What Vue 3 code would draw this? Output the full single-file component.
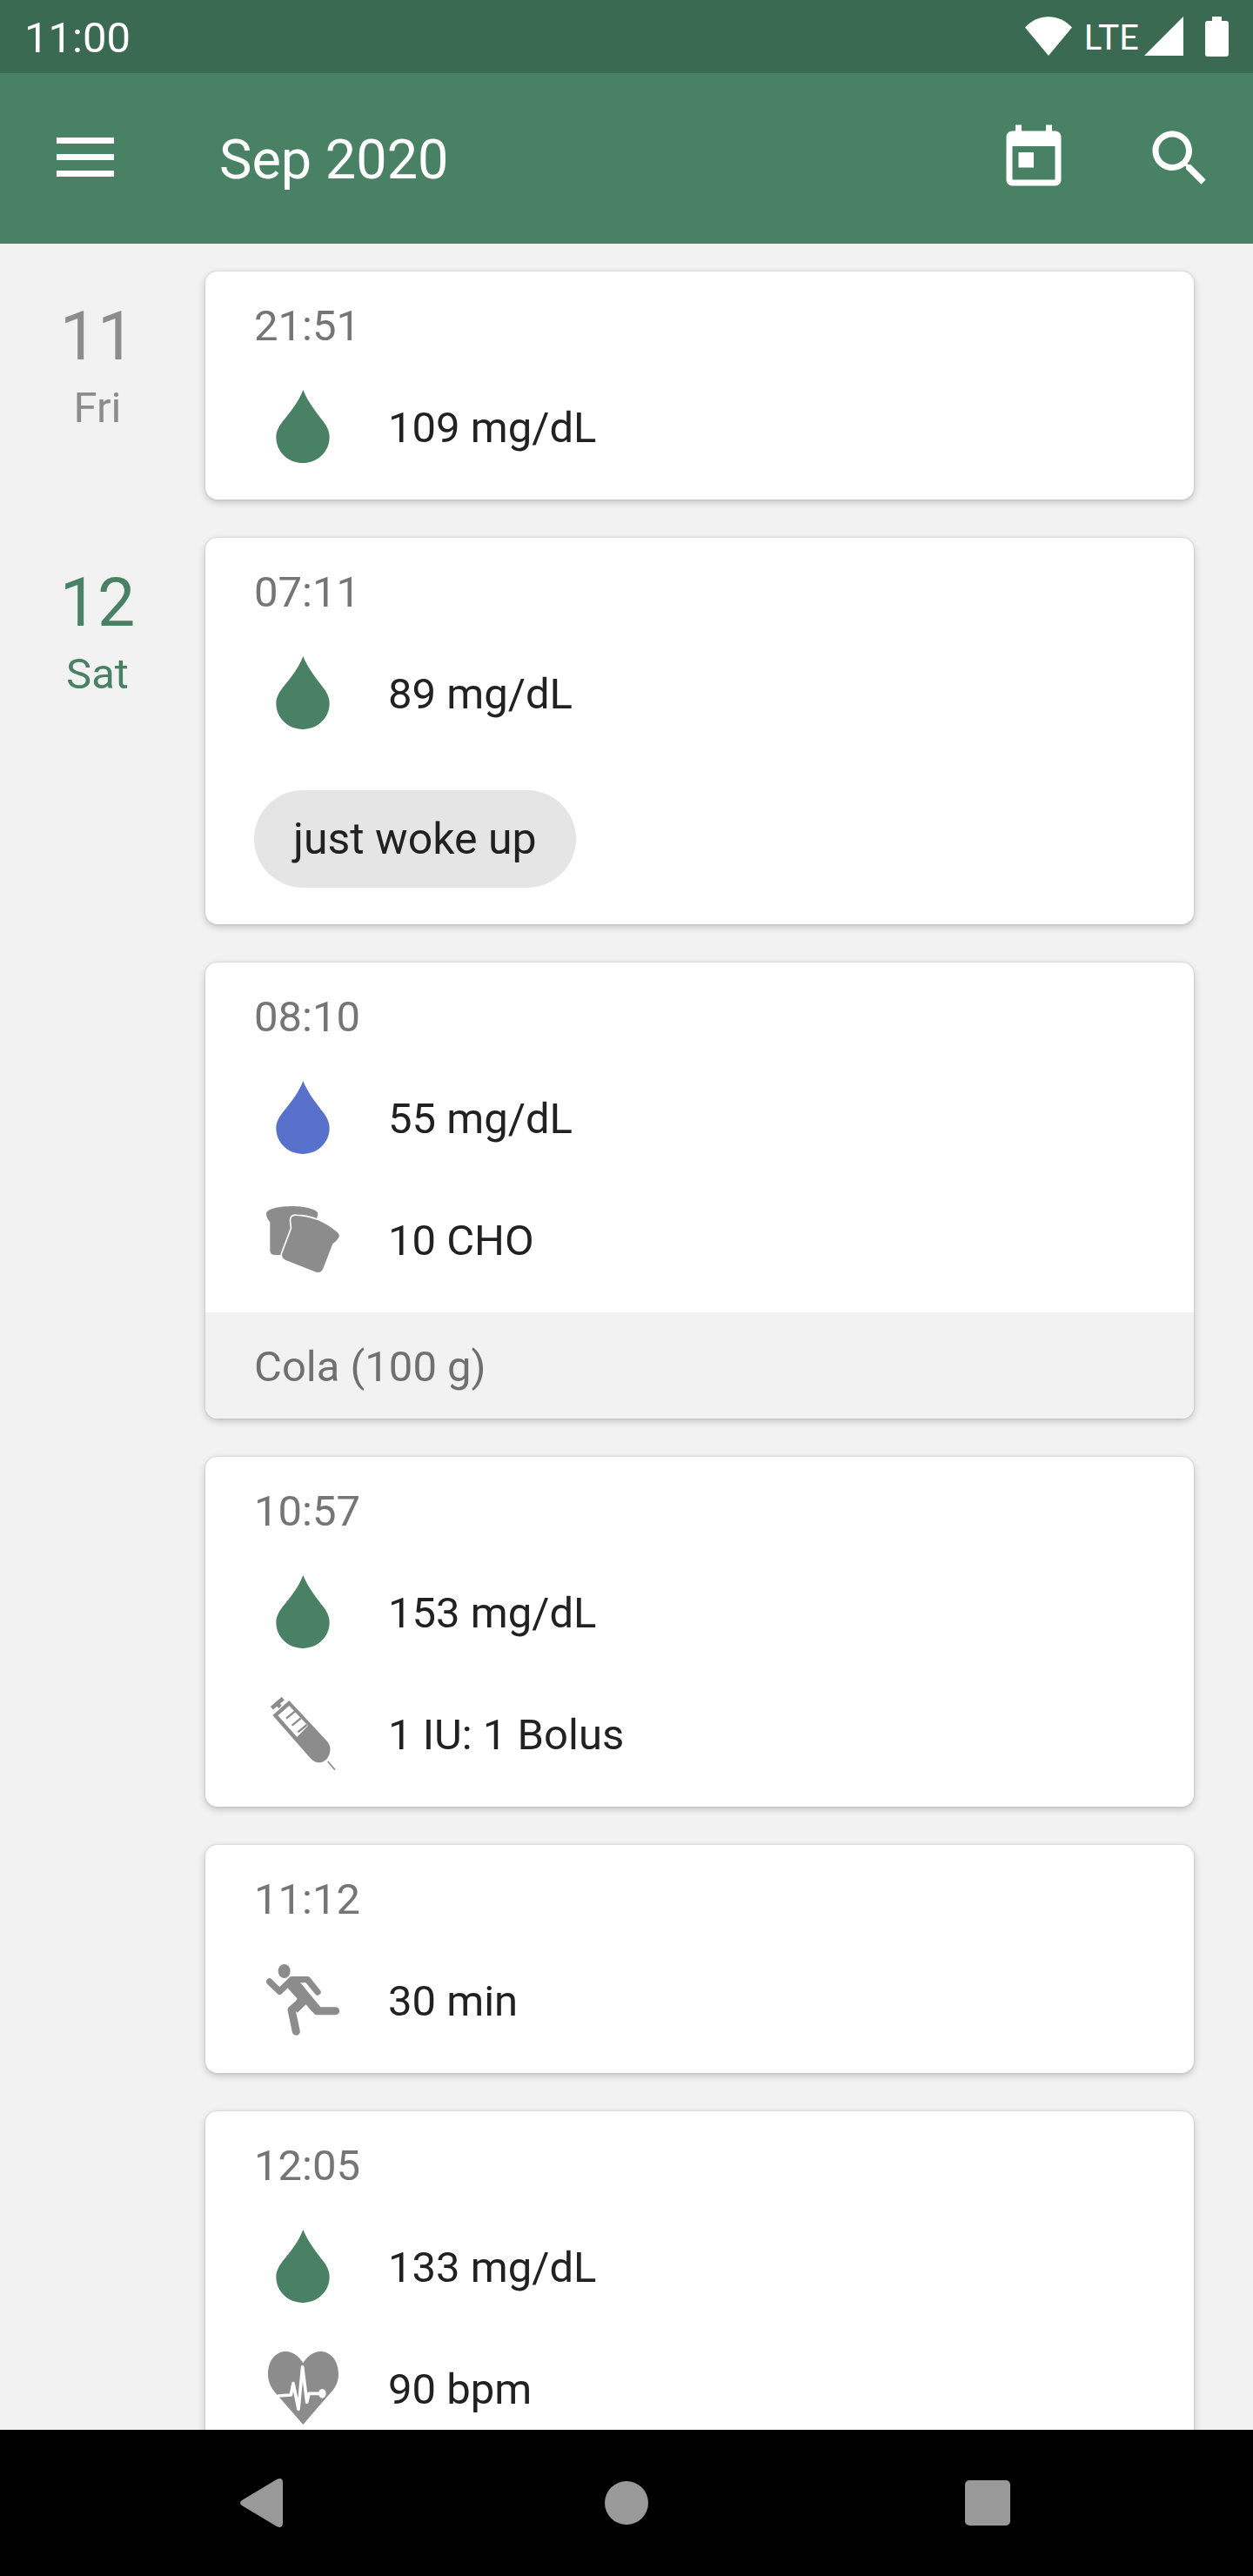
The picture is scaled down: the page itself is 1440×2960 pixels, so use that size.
<script setup>
const days = [
  {
    num: '11',
    name: 'Fri',
    weekend: false,
    entries: [{ time: '21:51', rows: [{ icon: 'drop', text: '109 mg/dL' }] }]
  },
  {
    num: '12',
    name: 'Sat',
    weekend: true,
    entries: [
      { time: '07:11', rows: [{ icon: 'drop', text: '89 mg/dL' }], tags: ['just woke up'] },
      {
        time: '08:10',
        rows: [
          { icon: 'drop', low: true, text: '55 mg/dL' },
          { icon: 'bread', text: '10 CHO' }
        ],
        note: 'Cola (100 g)'
      },
      {
        time: '10:57',
        rows: [
          { icon: 'drop', text: '153 mg/dL' },
          { icon: 'syringe', text: '1 IU: 1 Bolus' }
        ]
      },
      { time: '11:12', rows: [{ icon: 'run', text: '30 min' }] },
      {
        time: '12:05',
        rows: [
          { icon: 'drop', text: '133 mg/dL' },
          { icon: 'heart', text: '90 bpm' }
        ]
      }
    ]
  }
]
</script>

<template>
  <div class="app">
    <div class="status">
      <span class="clock">11:00</span>
      <svg class="wifi" width="54" height="46" viewBox="0 0 54 46"><path d="M0 12.500C15-4 39-4 54 12.500L27 45z" /></svg>
      <span class="network">LTE</span>
      <svg class="signal" width="45" height="46" viewBox="0 0 45 46"><path d="M45 0V45H0z" /></svg>
      <svg width="27" height="46" viewBox="0 0 27 46"><path d="M8 0h11v5h5q3 0 3 3v35q0 3-3 3H3q-3 0-3-3V8q0-3 3-3h5z" /></svg>
    </div>

    <header class="toolbar">
      <button class="tool menu" type="button" aria-label="Open menu">
        <svg viewBox="0 0 84 84"><path d="M9 18h66v7H9zM9 37h66v7H9zM9 56h66v7H9z" /></svg>
      </button>
      <h1>Sep 2020</h1>
      <button class="tool" type="button" aria-label="Go to today">
        <svg viewBox="0 0 24 24"><path d="M19 3h-1V1h-2v2H8V1H6v2H5c-1.110 0-1.990.9-1.990 2L3 19c0 1.100.890 2 2 2h14c1.100 0 2-.9 2-2V5c0-1.100-.9-2-2-2zm0 16H5V8h14v11zM7 10h5v5H7z" /></svg>
      </button>
      <button class="tool" type="button" aria-label="Search">
        <svg viewBox="0 0 24 24"><path d="M15.500 14h-.790l-.280-.270C15.410 12.590 16 11.110 16 9.500 16 5.910 13.090 3 9.500 3S3 5.910 3 9.500 5.910 16 9.500 16c1.610 0 3.090-.590 4.230-1.570l.270.280v.790l5 4.990L20.490 19l-4.990-5zm-6 0C7.010 14 5 11.990 5 9.500S7.010 5 9.500 5 14 7.010 14 9.500 11.990 14 9.500 14z" /></svg>
      </button>
    </header>

    <main class="log">
      <section v-for="day in days" :key="day.num" class="day">
        <div class="date" :class="{ weekend: day.weekend }">
          <span class="num">{{ day.num }}</span>
          <span class="name">{{ day.name }}</span>
        </div>
        <div class="entries">
          <article v-for="entry in day.entries" :key="entry.time" class="card">
            <div class="body">
              <time>{{ entry.time }}</time>
              <div v-for="row in entry.rows" :key="row.text" class="row">
                <svg v-if="row.icon === 'drop'" class="icon drop" :class="{ low: row.low }" viewBox="0 0 252 252">
                  <path d="M127 0C145 45 175 80 196 108C210 127 218 142 218 163C218 213 177 252 126 252S34 213 34 163C34 142 44 125 57 108C80 80 110 45 127 0z" />
                </svg>
                <svg v-else-if="row.icon === 'bread'" class="icon" viewBox="0 0 252 252">
                  <path d="M0 38C0 20 50 12 89 12S178 22 178 38L174 56L120 180H30Q13 180 13 164V67Q0 52 0 38z" />
                  <path class="front" d="M88 88L85 62Q84 44 103 45C150 46 205 65 246 103Q256 113 248 123L240 133L229 142L197 224Q190 244 172 239L67 198Q51 190 55 175z" />
                </svg>
                <svg v-else-if="row.icon === 'syringe'" class="icon" viewBox="0 0 252 252">
                  <path class="line plunger" d="M19 38L58 5M37 22L48 34" />
                  <path fill-rule="evenodd" d="M22 63L79 12L211 154C224 170 224 195 209 213C194 230 170 230 154 213zM40 64L106 138L144 99L79 30z" />
                  <path class="line tick" d="M99 49L69 74M119 73L89 98M140 96L109 121" />
                  <path class="line needle" d="M212 222L237 251" />
                </svg>
                <svg v-else-if="row.icon === 'run'" class="icon" viewBox="0 0 252 252">
                  <ellipse cx="62" cy="27" rx="21" ry="24" />
                  <path d="M70 81L88 46L117 66L187 151L175 166L160 168L137 142L107 170L88 150L107 122z" />
                  <path class="line arm" d="M11 63L46 97L88 56H142L177 99" />
                  <path class="line leg" d="M140 124L175 164H239M118 134L87 160L103 235" />
                </svg>
                <svg v-else class="icon" viewBox="0 0 252 252">
                  <path d="M127 40C115 20 95 0 67 0C32 0 6 32 6 78C6 110 20 130 40 152L127 252L213 152C235 130 249 110 249 78C249 32 222 0 187 0C160 0 139 20 127 40z" />
                  <path class="line pulse" d="M42 153L85 150L93 110L111 199L125 53L140 175L147 145H190" />
                  <ellipse class="bead" cx="193" cy="145" rx="13" ry="16" />
                </svg>
                <span class="value">{{ row.text }}</span>
              </div>
              <div v-if="entry.tags" class="tags">
                <span v-for="tag in entry.tags" :key="tag" class="tag">{{ tag }}</span>
              </div>
            </div>
            <p v-if="entry.note" class="note">{{ entry.note }}</p>
          </article>
        </div>
      </section>
    </main>

    <nav class="system">
      <button type="button" aria-label="Back">
        <svg viewBox="0 0 84 84"><path d="M15 39L55 15Q62 12 62 19V65Q62 72 55 69L15 45Q11 42 15 39z" /></svg>
      </button>
      <button type="button" aria-label="Home">
        <svg viewBox="0 0 84 84"><circle cx="42" cy="42" r="25" /></svg>
      </button>
      <button type="button" aria-label="Recent apps">
        <svg viewBox="0 0 84 84"><rect x="16" y="16" width="52" height="52" rx="5" /></svg>
      </button>
    </nav>
  </div>
</template>

<style>
body {
  background: #f2f2f2;
}
</style>

<style scoped>
.app {
  display: flex;
  flex-direction: column;
  height: 100vh;
  background: #f2f2f2;
  color: #212121;
  font-family: Roboto, sans-serif;
  font-size: 49px;
  line-height: 56px;
}

svg {
  display: block;
  flex: none;
  fill: currentColor;
}

button {
  display: flex;
  align-items: center;
  justify-content: center;
  padding: 0;
  border: 0;
  background: none;
  color: inherit;
  font: inherit;
}

button svg {
  width: 84px;
  height: 84px;
}

.status {
  display: flex;
  flex: none;
  align-items: center;
  height: 84px;
  padding: 0 28px;
  background: #3a6a51;
  color: #fff;
}

.clock {
  margin-right: auto;
  padding-top: 4px;
}

.wifi {
  margin-right: 14px;
}

.network {
  font-family: Lato, sans-serif;
  font-size: 40px;
}

.signal {
  margin: 0 25px 0 6px;
}

.toolbar {
  display: flex;
  flex: none;
  align-items: center;
  height: 196px;
  background: #488164;
  color: #fff;
}

.tool {
  width: 168px;
  height: 168px;
}

.menu {
  width: 196px;
  margin-right: 56px;
}

h1 {
  flex: 1;
  margin: 0;
  padding-top: 4px;
  font-size: 63px;
  font-weight: 400;
  line-height: 74px;
}

.log {
  display: flex;
  flex: 1;
  flex-direction: column;
  gap: 44px;
  min-height: 0;
  padding-top: 32px;
  overflow-y: auto;
  scrollbar-width: none;
}

.day {
  display: flex;
  padding-right: 68px;
}

.date {
  display: flex;
  flex: none;
  flex-direction: column;
  align-items: center;
  gap: 7px;
  width: 224px;
  margin-right: 12px;
  padding-top: 28px;
  color: #8c8c8c;
}

.weekend {
  color: #488164;
}

.num {
  font-size: 77px;
  line-height: 94px;
}

.entries {
  display: flex;
  flex: 1;
  flex-direction: column;
  gap: 44px;
}

.card {
  overflow: hidden;
  border-radius: 14px;
  background: #fff;
  box-shadow: 0 3px 8px rgba(0, 0, 0, 0.2), 0 0 3px rgba(0, 0, 0, 0.14);
}

.body {
  padding: 35px 56px 14px;
}

time {
  display: block;
  margin-bottom: 17px;
  color: #757575;
}

.row {
  display: flex;
  align-items: center;
  gap: 56px;
  height: 140px;
  padding-left: 14px;
}

.icon {
  width: 84px;
  height: 84px;
  color: #8c8c8c;
}

.drop {
  color: #488164;
}

.low {
  color: #5872cc;
}

.front {
  stroke: #fff;
  stroke-width: 10;
  paint-order: stroke;
}

.line {
  fill: none;
  stroke: currentColor;
  stroke-linejoin: round;
}

.plunger {
  stroke-width: 14;
}

.tick {
  stroke-width: 7;
}

.needle {
  stroke-width: 5;
}

.arm {
  stroke-width: 22;
  stroke-linecap: round;
}

.leg {
  stroke-width: 27;
  stroke-linecap: round;
}

.pulse {
  stroke: #fff;
  stroke-width: 11;
  stroke-linecap: round;
}

.bead {
  fill: #fff;
}

.value {
  padding-top: 4px;
}

.tags {
  display: flex;
  padding: 42px 0 28px;
}

.tag {
  padding: 28px 45px;
  border-radius: 56px;
  background: #e5e5e5;
  font-size: 50px;
}

.note {
  margin: 0;
  padding: 35px 56px 31px;
  background: #f2f2f2;
  color: #707070;
}

.system {
  display: grid;
  flex: none;
  grid-template-columns: repeat(3, 1fr);
  height: 168px;
  padding: 0 97px;
  background: #000;
  color: #999;
}
</style>
